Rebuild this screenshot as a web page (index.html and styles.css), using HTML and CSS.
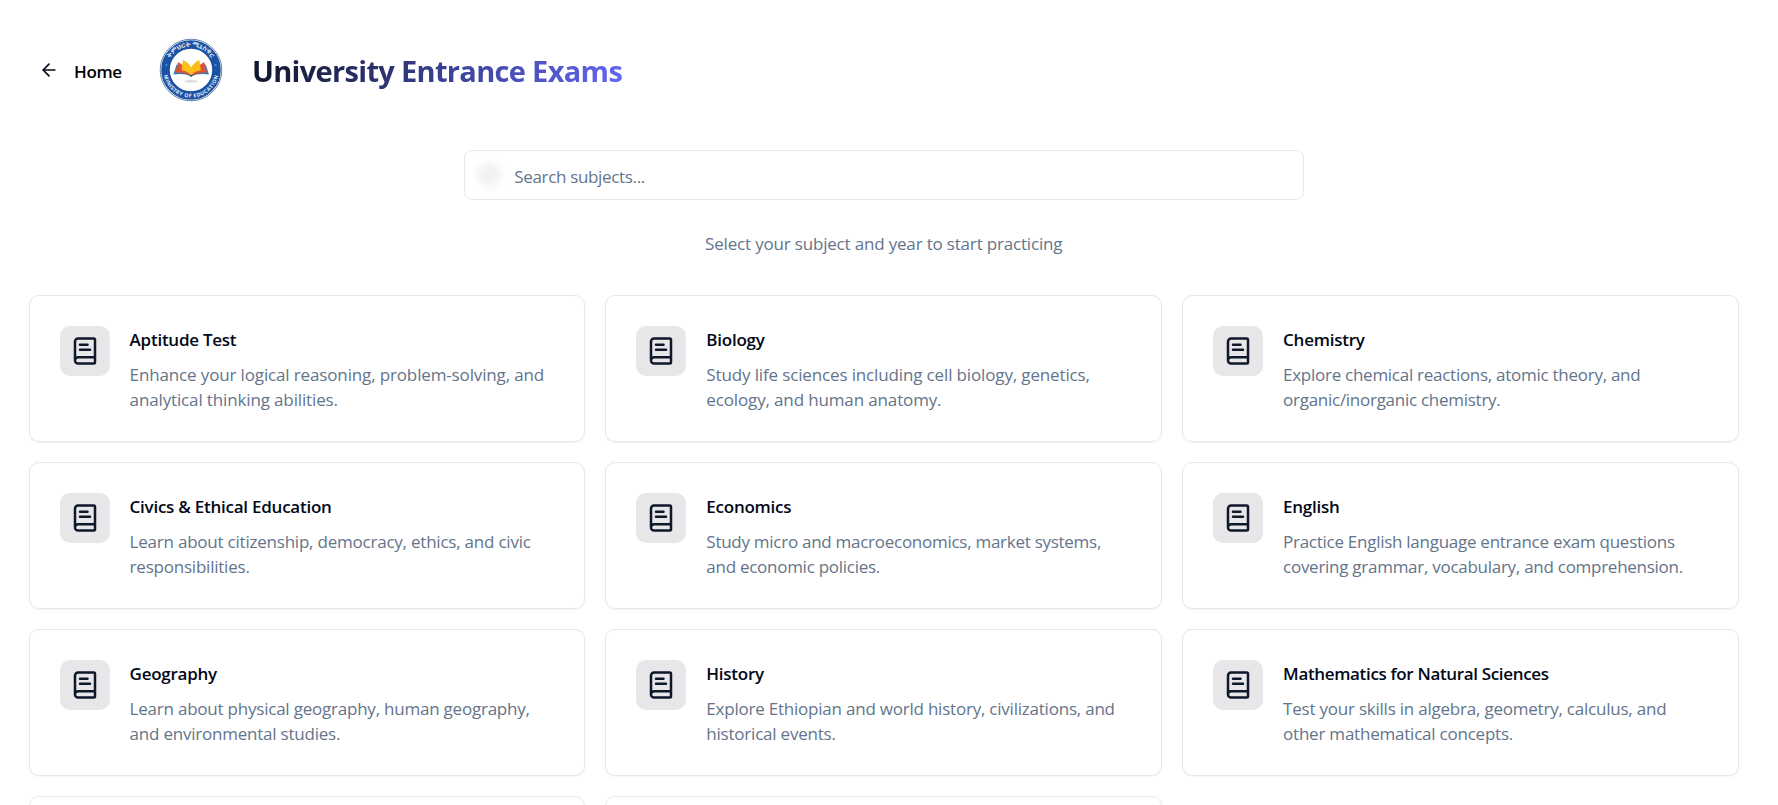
FILE: index.html
```html
<!DOCTYPE html>
<html lang="en">
<head>
<meta charset="utf-8">
<title>University Entrance Exams</title>
<link rel="stylesheet" href="styles.css">
</head>
<body>
<svg width="0" height="0" class="defs">
  <symbol id="book" viewBox="0 0 24 24">
    <path d="M4 19.5v-15A2.5 2.5 0 0 1 6.5 2H19a1 1 0 0 1 1 1v18a1 1 0 0 1-1 1H6.5a1 1 0 0 1 0-5H20"/>
    <path d="M8 11h8"/><path d="M8 7h6"/>
  </symbol>
</svg>
<main class="page">
  <header class="header">
    <a class="home">
      <svg class="arrow" viewBox="0 0 24 24"><path d="m12 19-7-7 7-7"/><path d="M19 12H5"/></svg>
      <span>Home</span>
    </a>
    <svg class="logo" viewBox="0 0 64 64">
      <defs>
        <path id="arcTop" d="M8.3 32a23.7 23.7 0 0 1 47.4 0"/>
        <path id="arcBottom" d="M4.400 32a27.600 27.600 0 0 0 55.200 0"/>
      </defs>
      <circle cx="32" cy="32" r="30.8" fill="#fff" stroke="#54779f" stroke-width=".9"/>
      <circle cx="32" cy="32" r="25.500" fill="none" stroke="#1c52a4" stroke-width="8.600"/>
      <circle cx="7.4" cy="27" r="1.1" fill="#4b9be0"/><circle cx="56.6" cy="27" r="1.1" fill="#4b9be0"/>
      <text class="seal seal-top"><textPath href="#arcTop" startOffset="50%" text-anchor="middle">ትምህርት ሚኒስቴር</textPath></text>
      <text class="seal seal-bottom"><textPath href="#arcBottom" startOffset="50%" text-anchor="middle">MINISTRY OF EDUCATION</textPath></text>
      <ellipse cx="32" cy="43.3" rx="7" ry="1.2" fill="#dcdcdf"/>
      <g transform="translate(-2.400 0) scale(1.080 1)">
        <path d="M18.500 26.500l-3 10q10.500-1.500 16.500 2 6-3.500 16.500-2l-3-10-13.500 8z" fill="#3b7eae"/>
        <path d="M20 24l-2.700 10.500q8.700-.5 14.700 3.500 6-4 14.700-3.500L44 24 32 33z" fill="#d9533a"/>
        <path d="M24.500 22l-1.500 10.300q6 1 9 5.200 3-4.200 9-5.200L39.500 22q-5.500 3-7.500 7.500-2-4.500-7.500-7.500z" fill="#fdbb13"/>
        <path d="M24.500 22q5.500 3 7.500 7.500V37q-2-4-6-5.500z" fill="#fdc520"/>
        <path d="M30.500 37h3L32 39z" fill="#293f62"/>
      </g>
    </svg>
    <h1 class="title">University Entrance Exams</h1>
  </header>

  <div class="search">
    <span class="search-glow"></span>
    <span class="placeholder">Search subjects...</span>
  </div>
  <p class="hint">Select your subject and year to start practicing</p>

  <section class="grid">
    <article class="card loose"><div class="tile"><svg><use href="#book"/></svg></div><div class="info"><h2>Aptitude Test</h2><p>Enhance your logical reasoning, problem-solving, and<br>analytical thinking abilities.</p></div></article>
    <article class="card loose"><div class="tile"><svg><use href="#book"/></svg></div><div class="info"><h2>Biology</h2><p>Study life sciences including cell biology, genetics,<br>ecology, and human anatomy.</p></div></article>
    <article class="card tight"><div class="tile"><svg><use href="#book"/></svg></div><div class="info"><h2>Chemistry</h2><p>Explore chemical reactions, atomic theory, and<br>organic/inorganic chemistry.</p></div></article>
    <article class="card"><div class="tile"><svg><use href="#book"/></svg></div><div class="info"><h2>Civics &amp; Ethical Education</h2><p>Learn about citizenship, democracy, ethics, and civic<br>responsibilities.</p></div></article>
    <article class="card tight"><div class="tile"><svg><use href="#book"/></svg></div><div class="info"><h2>Economics</h2><p>Study micro and macroeconomics, market systems,<br>and economic policies.</p></div></article>
    <article class="card tight"><div class="tile"><svg><use href="#book"/></svg></div><div class="info"><h2>English</h2><p>Practice English language entrance exam questions<br>covering grammar, vocabulary, and comprehension.</p></div></article>
    <article class="card"><div class="tile"><svg><use href="#book"/></svg></div><div class="info"><h2>Geography</h2><p>Learn about physical geography, human geography,<br>and environmental studies.</p></div></article>
    <article class="card"><div class="tile"><svg><use href="#book"/></svg></div><div class="info"><h2>History</h2><p>Explore Ethiopian and world history, civilizations, and<br>historical events.</p></div></article>
    <article class="card"><div class="tile"><svg><use href="#book"/></svg></div><div class="info"><h2 class="long">Mathematics for Natural Sciences</h2><p>Test your skills in algebra, geometry, calculus, and<br>other mathematical concepts.</p></div></article>
    <article class="card"></article>
    <article class="card"></article>
  </section>
</main>
</body>
</html>
```
FILE: styles.css
```css
* { box-sizing: border-box; margin: 0; padding: 0; }
html, body { height: 805px; overflow: hidden; }
body {
  background: #fff;
  color: #020817;
  font-family: "Open Sans", "Noto Sans", sans-serif;
  font-size: 17px;
  line-height: 25px;
}
.defs { display: block; position: absolute; }
.page { padding: 30px 39.2px 0 28.6px; height: 805px; overflow: hidden; }

.header { display: flex; align-items: center; height: 80px; padding-left: 10.4px; }
.home { display: flex; align-items: center; gap: 15px; width: 120px; font-weight: 600; color: #000; letter-spacing: -.35px; }
.home span { padding-top: 3px; }
.arrow { width: 20px; height: 20px; fill: none; stroke: #020817; stroke-width: 2; stroke-linecap: round; stroke-linejoin: round; }
.logo { width: 64px; height: 64px; }
.seal { font: 700 5.200px "Open Sans", sans-serif; fill: #e8f0fa; }
.seal-top { font-size: 6.800px; letter-spacing: .1px; }
.seal-bottom { letter-spacing: .5px; }
.title {
  margin-left: 29px;
  padding-top: 1px;
  font-size: 29px;
  line-height: 40px;
  font-weight: 700;
  letter-spacing: -.68px;
  background: linear-gradient(90deg, #0f172a, #6366f1);
  -webkit-background-clip: text;
  background-clip: text;
  color: transparent;
}

.search {
  display: flex;
  align-items: center;
  width: 840px;
  height: 50px;
  margin: 40px auto 0;
  padding-left: 12px;
  border: 1px solid #e2e8f0;
  border-radius: 7.500px;
}
.search-glow { width: 24px; height: 24px; border-radius: 50%; background: #f0f1f2; filter: blur(4px); }
.placeholder { margin-left: 13.500px; padding-top: 2px; color: #64748b; letter-spacing: -.33px; }
.hint { margin-top: 31px; text-align: center; color: #64748b; letter-spacing: -.18px; }

.grid { display: grid; grid-template-columns: repeat(3, 1fr); gap: 20px; margin-top: 39px; }
.card {
  display: flex;
  gap: 20px;
  height: 147px;
  padding: 30px;
  border: 1px solid #e2e8f0;
  border-radius: 10px;
  box-shadow: 0 1px 2px rgba(0, 0, 0, .05);
}
.tile { display: flex; align-items: center; justify-content: center; flex: none; width: 50px; height: 50px; border-radius: 10px; background: #e7e7e9; }
.tile svg { width: 30px; height: 30px; fill: none; stroke: #0f172a; stroke-width: 2; stroke-linecap: round; stroke-linejoin: round; }
.info { white-space: nowrap; }
.info h2 { font-size: 17px; line-height: 27px; font-weight: 600; letter-spacing: -.25px; }
.info h2.long { letter-spacing: -.34px; }
.info p { margin-top: 9px; color: #64748b; letter-spacing: -.22px; }
.loose .info p { letter-spacing: -.14px; }
.tight .info p { letter-spacing: -.27px; }
```
